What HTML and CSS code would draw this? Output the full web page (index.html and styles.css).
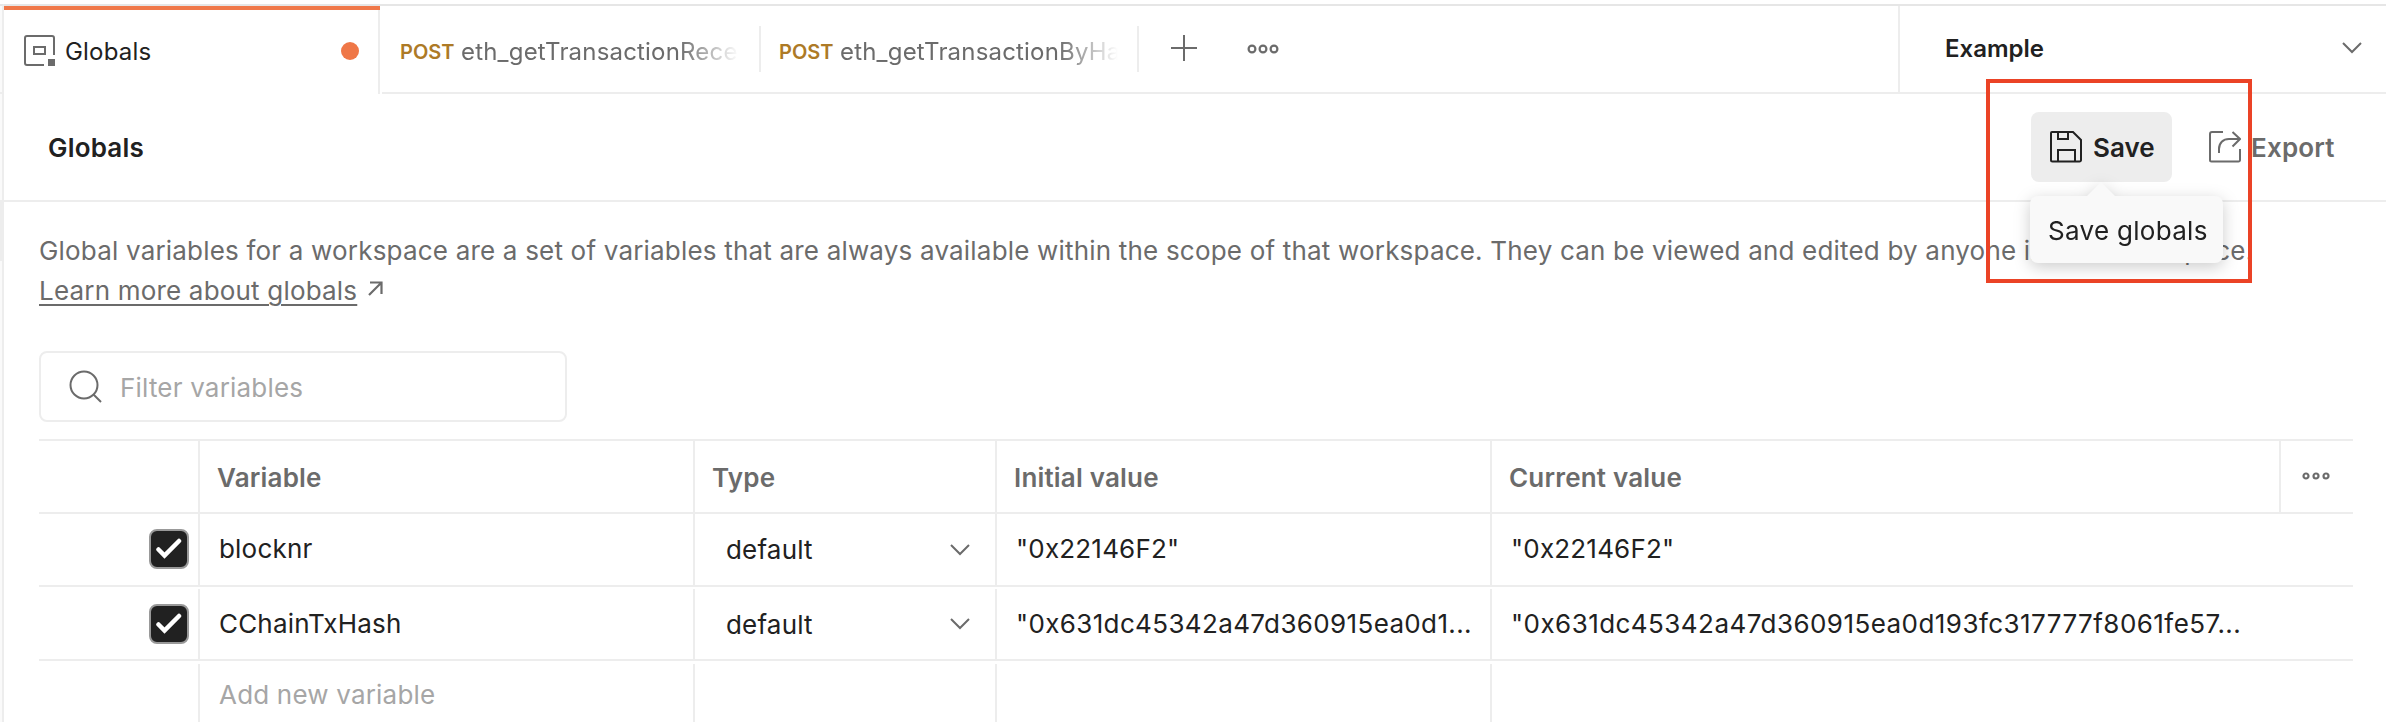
FILE: index.html
```html
<!DOCTYPE html>
<html lang="en">
<head>
<meta charset="utf-8">
<title>Globals</title>
<link rel="stylesheet" href="styles.css">
</head>
<body>
<div class="app">
  <div class="rail"><div class="rail-tab"></div><div class="rail-thumb"></div></div>
  <main class="main">
    <div class="tabbar">
      <div class="tab tab-active">
        <svg class="tab-icon" width="32" height="32" viewBox="0 0 32 32" fill="none" stroke="#6b6b6b" stroke-width="2"><path d="M20 30H3a2 2 0 0 1-2-2V3a2 2 0 0 1 2-2h25a2 2 0 0 1 2 2v17"/><path d="M10 12h11v7H10z"/><path d="M24 24h7v7h-7z" fill="#6b6b6b" stroke="none"/></svg>
        <span class="tab-title">Globals</span>
        <span class="dot"></span>
      </div>
      <div class="tab"><span class="method">POST</span><span class="tab-name">eth_getTransactionReceipt</span></div>
      <div class="tab tab-second"><span class="method">POST</span><span class="tab-name">eth_getTransactionByHash</span></div>
      <svg class="plus" width="26" height="26" viewBox="0 0 26 26" stroke="#6b6b6b" stroke-width="2"><path d="M13 0v26M0 13h26"/></svg>
      <svg class="more" width="32" height="10" viewBox="0 0 32 10" fill="none" stroke="#6b6b6b" stroke-width="2.200"><circle cx="5" cy="5" r="3.400"/><circle cx="16" cy="5" r="3.400"/><circle cx="27" cy="5" r="3.400"/></svg>
      <div class="env"><span>Example</span><svg width="20" height="12" viewBox="0 0 20 12" fill="none" stroke="#6b6b6b" stroke-width="2"><path d="M1 1l9 9 9-9"/></svg></div>
    </div>
    <header class="header">
      <h1>Globals</h1>
      <div class="actions">
        <div class="btn btn-save">
          <svg width="32" height="32" viewBox="0 0 32 32" fill="none" stroke="#212121" stroke-width="2"><path d="M2 1h21l8 8v20a1.500 1.500 0 0 1-1.500 1.500h-27A1.500 1.500 0 0 1 1 29V2a1 1 0 0 1 1-1z"/><path d="M8 1v7h10V1M8 30V19h17v11"/></svg>
          <span>Save</span>
          <div class="tooltip">Save globals</div>
        </div>
        <div class="btn btn-export">
          <svg width="32" height="32" viewBox="0 0 32 32" fill="none" stroke="#6b6b6b" stroke-width="2"><path d="M14 1H3a2 2 0 0 0-2 2v26a1.500 1.500 0 0 0 1.500 1.500h27A1.500 1.500 0 0 0 31 29V18M10 22v-4C10 12 14 8 20 8h11M23.500 1l7.500 7-7.500 7.500"/></svg>
          <span>Export</span>
        </div>
      </div>
    </header>
    <section class="content">
      <p class="desc">Global variables for a workspace are a set of variables that are always available within the scope of that workspace. They can be viewed and edited by anyone in that workspace.<br><a class="link">Learn more about globals</a><svg class="arrow" width="15" height="15" viewBox="0 0 15 15" fill="none" stroke="#6b6b6b" stroke-width="2.200"><path d="M1 14L13 2M2 1.500h11.500V13"/></svg></p>
      <div class="filter">
        <svg width="34" height="34" viewBox="0 0 34 34" fill="none" stroke="#6b6b6b" stroke-width="2"><circle cx="15" cy="15" r="13.500"/><path d="M24.500 24.500L32 32"/></svg>
        <span>Filter variables</span>
      </div>
      <div class="table">
        <div class="row row-head">
          <div class="cell"></div><div class="cell">Variable</div><div class="cell">Type</div><div class="cell">Initial value</div><div class="cell">Current value</div>
          <div class="cell cell-more"><svg width="28" height="10" viewBox="0 0 28 10" fill="none" stroke="#6b6b6b" stroke-width="2.200"><circle cx="4" cy="4" r="2.500"/><circle cx="14" cy="4" r="2.500"/><circle cx="24" cy="4" r="2.500"/></svg></div>
        </div>
        <div class="row">
          <div class="cell cell-check"><span class="check"><svg width="28" height="22" viewBox="0 0 28 22" fill="none" stroke="#fff" stroke-width="4.500" stroke-linecap="round"><path d="M3.500 11.500l6 6L24 3"/></svg></span></div>
          <div class="cell">blocknr</div>
          <div class="cell cell-type"><span>default</span><svg width="20" height="12" viewBox="0 0 20 12" fill="none" stroke="#6b6b6b" stroke-width="2"><path d="M1 1l9 9 9-9"/></svg></div>
          <div class="cell">"0x22146F2"</div><div class="cell">"0x22146F2"</div><div class="cell"></div>
        </div>
        <div class="row row-second">
          <div class="cell cell-check"><span class="check"><svg width="28" height="22" viewBox="0 0 28 22" fill="none" stroke="#fff" stroke-width="4.500" stroke-linecap="round"><path d="M3.500 11.500l6 6L24 3"/></svg></span></div>
          <div class="cell">CChainTxHash</div>
          <div class="cell cell-type"><span>default</span><svg width="20" height="12" viewBox="0 0 20 12" fill="none" stroke="#6b6b6b" stroke-width="2"><path d="M1 1l9 9 9-9"/></svg></div>
          <div class="cell value-initial">"0x631dc45342a47d360915ea0d1...</div><div class="cell value-current">"0x631dc45342a47d360915ea0d193fc317777f8061fe57...</div><div class="cell"></div>
        </div>
        <div class="row row-new">
          <div class="cell"></div><div class="cell">Add new variable</div><div class="cell"></div><div class="cell"></div><div class="cell"></div><div class="cell"></div>
        </div>
      </div>
    </section>
  </main>
  <div class="highlight"></div>
</div>
</body>
</html>
```

FILE: styles.css
```css
* { box-sizing: border-box; }
body { margin: 0; background: #fff; font-family: Inter, "Liberation Sans", sans-serif; color: #212121; letter-spacing: .19px; }
svg { display: block; flex: none; }
.app { position: relative; display: flex; width: 2386px; height: 722px; padding-top: 4px; overflow: hidden; }
.rail { flex: none; width: 4px; border-top: 2px solid #e6e6e6; border-right: 2px solid #ededed; background: #fafafa; }
.rail-tab { height: 88px; border-bottom: 2px solid #ededed; }
.rail-thumb { height: 61px; margin-top: 106px; background: #ededed; }
.main { flex: 1; min-width: 0; border-top: 2px solid #e6e6e6; }

.tabbar { display: flex; height: 88px; font-size: 24px; background: linear-gradient(#ededed, #ededed) 378px 86px / 100% 2px no-repeat; }
.tab { display: flex; align-items: center; flex: none; width: 381px; height: 46px; margin: 20px 0 0; padding: 5px 20px 0 20px; border-right: 2px solid #ededed; }
.tab.tab-second { width: 378px; padding-left: 18px; padding-right: 19px; }
.tab.tab-active { width: 376px; height: 88px; margin: 0; padding: 2px 21px 4px 20px; border-top: 4px solid #f07849; border-right: 0; box-shadow: inset -2px 0 #ededed; }
.tab-title { margin-left: 9px; flex: 1; }
.dot { width: 18px; height: 18px; border-radius: 50%; background: #ef7747; }
.method { font-size: 20px; font-weight: 600; color: #ad7a26; width: 61px; flex: none; letter-spacing: 0; }
.tab-name { flex: 1; overflow: hidden; white-space: nowrap; line-height: 40px; color: #6b6b6b; -webkit-mask-image: linear-gradient(to right, #000 calc(100% - 60px), transparent); mask-image: linear-gradient(to right, #000 calc(100% - 60px), transparent); }
.plus { margin: 29px 0 0 32px; }
.more { margin: 38px 0 0 50px; }
.env { display: flex; align-items: center; justify-content: space-between; width: 488px; height: 86px; margin-left: auto; padding: 0 24px 2px 45px; border-left: 2px solid #ededed; font-weight: 600; letter-spacing: 0; }

.header { display: flex; align-items: center; justify-content: space-between; height: 108px; padding: 0 49px 0 44px; border-bottom: 2px solid #ededed; }
h1 { margin: 0; font-size: 26px; font-weight: 600; }
.actions { display: flex; align-items: center; gap: 37px; font-size: 26px; font-weight: 600; }
.btn { display: flex; align-items: center; gap: 11px; height: 70px; }
.btn-save { position: relative; width: 141px; padding-left: 19px; border-radius: 8px; background: #ededed; letter-spacing: 0; }
.btn-export { width: 128px; color: #6b6b6b; gap: 10px; }
.tooltip { position: absolute; z-index: 2; left: -1px; top: 84px; width: 193px; height: 67px; padding-left: 18px; border-radius: 8px; background: #f9f9f9; font-weight: 400; line-height: 69px; white-space: nowrap; letter-spacing: .3px; filter: drop-shadow(0 4px 8px rgba(0, 0, 0, .2)); }
.tooltip::before { content: ""; position: absolute; left: 57px; top: -14px; border: 14px solid transparent; border-top: 0; border-bottom-color: #f9f9f9; }
.highlight { position: absolute; z-index: 3; left: 1986px; top: 79px; width: 266px; height: 204px; border: 4px solid #eb4326; }

.content { padding: 29px 33px 0 35px; font-size: 26px; }
.desc { margin: 0; line-height: 40px; color: #6b6b6b; white-space: nowrap; }
.link { text-decoration: underline; text-decoration-thickness: 2px; text-underline-offset: 4px; }
.arrow { display: inline-block; margin-left: 11px; vertical-align: 4px; }
.filter { display: flex; align-items: center; gap: 17px; width: 528px; height: 71px; margin-top: 40px; padding: 1px 0 0 28px; border: 2px solid #ededed; border-radius: 8px; color: #a6a6a6; }
.table { margin-top: 17px; border-top: 2px solid #ededed; }
.row { display: grid; grid-template-columns: 161px 495px 302px 495px 789px 1fr; height: 73px; border-bottom: 2px solid #ededed; }
.row-second { height: 74px; padding-top: 2px; }
.row-new { height: 62px; padding-top: 3px; border: 0; color: #a6a6a6; }
.cell { display: flex; align-items: center; border-right: 2px solid #ededed; padding: 0 0 2px 19px; white-space: nowrap; }
.cell:last-child, .row:not(.row-head) .cell:nth-child(5) { border-right: 0; }
.row-head .cell { padding: 1px 0 0 17px; font-weight: 600; color: #6b6b6b; }
.row-head .cell-more { padding: 0 0 0 21px; }
.row .cell-check { padding: 0 9px 1px 0; justify-content: flex-end; }
.row .cell-type { padding: 0 25px 0 31px; justify-content: space-between; }
.row-new .cell { padding-top: 4px; }
.value-initial { letter-spacing: .36px; }
.value-current { letter-spacing: .45px; }
.check { display: flex; align-items: center; justify-content: center; width: 40px; height: 40px; border: 2px solid #999; border-radius: 8px; background: #212121; }
```
